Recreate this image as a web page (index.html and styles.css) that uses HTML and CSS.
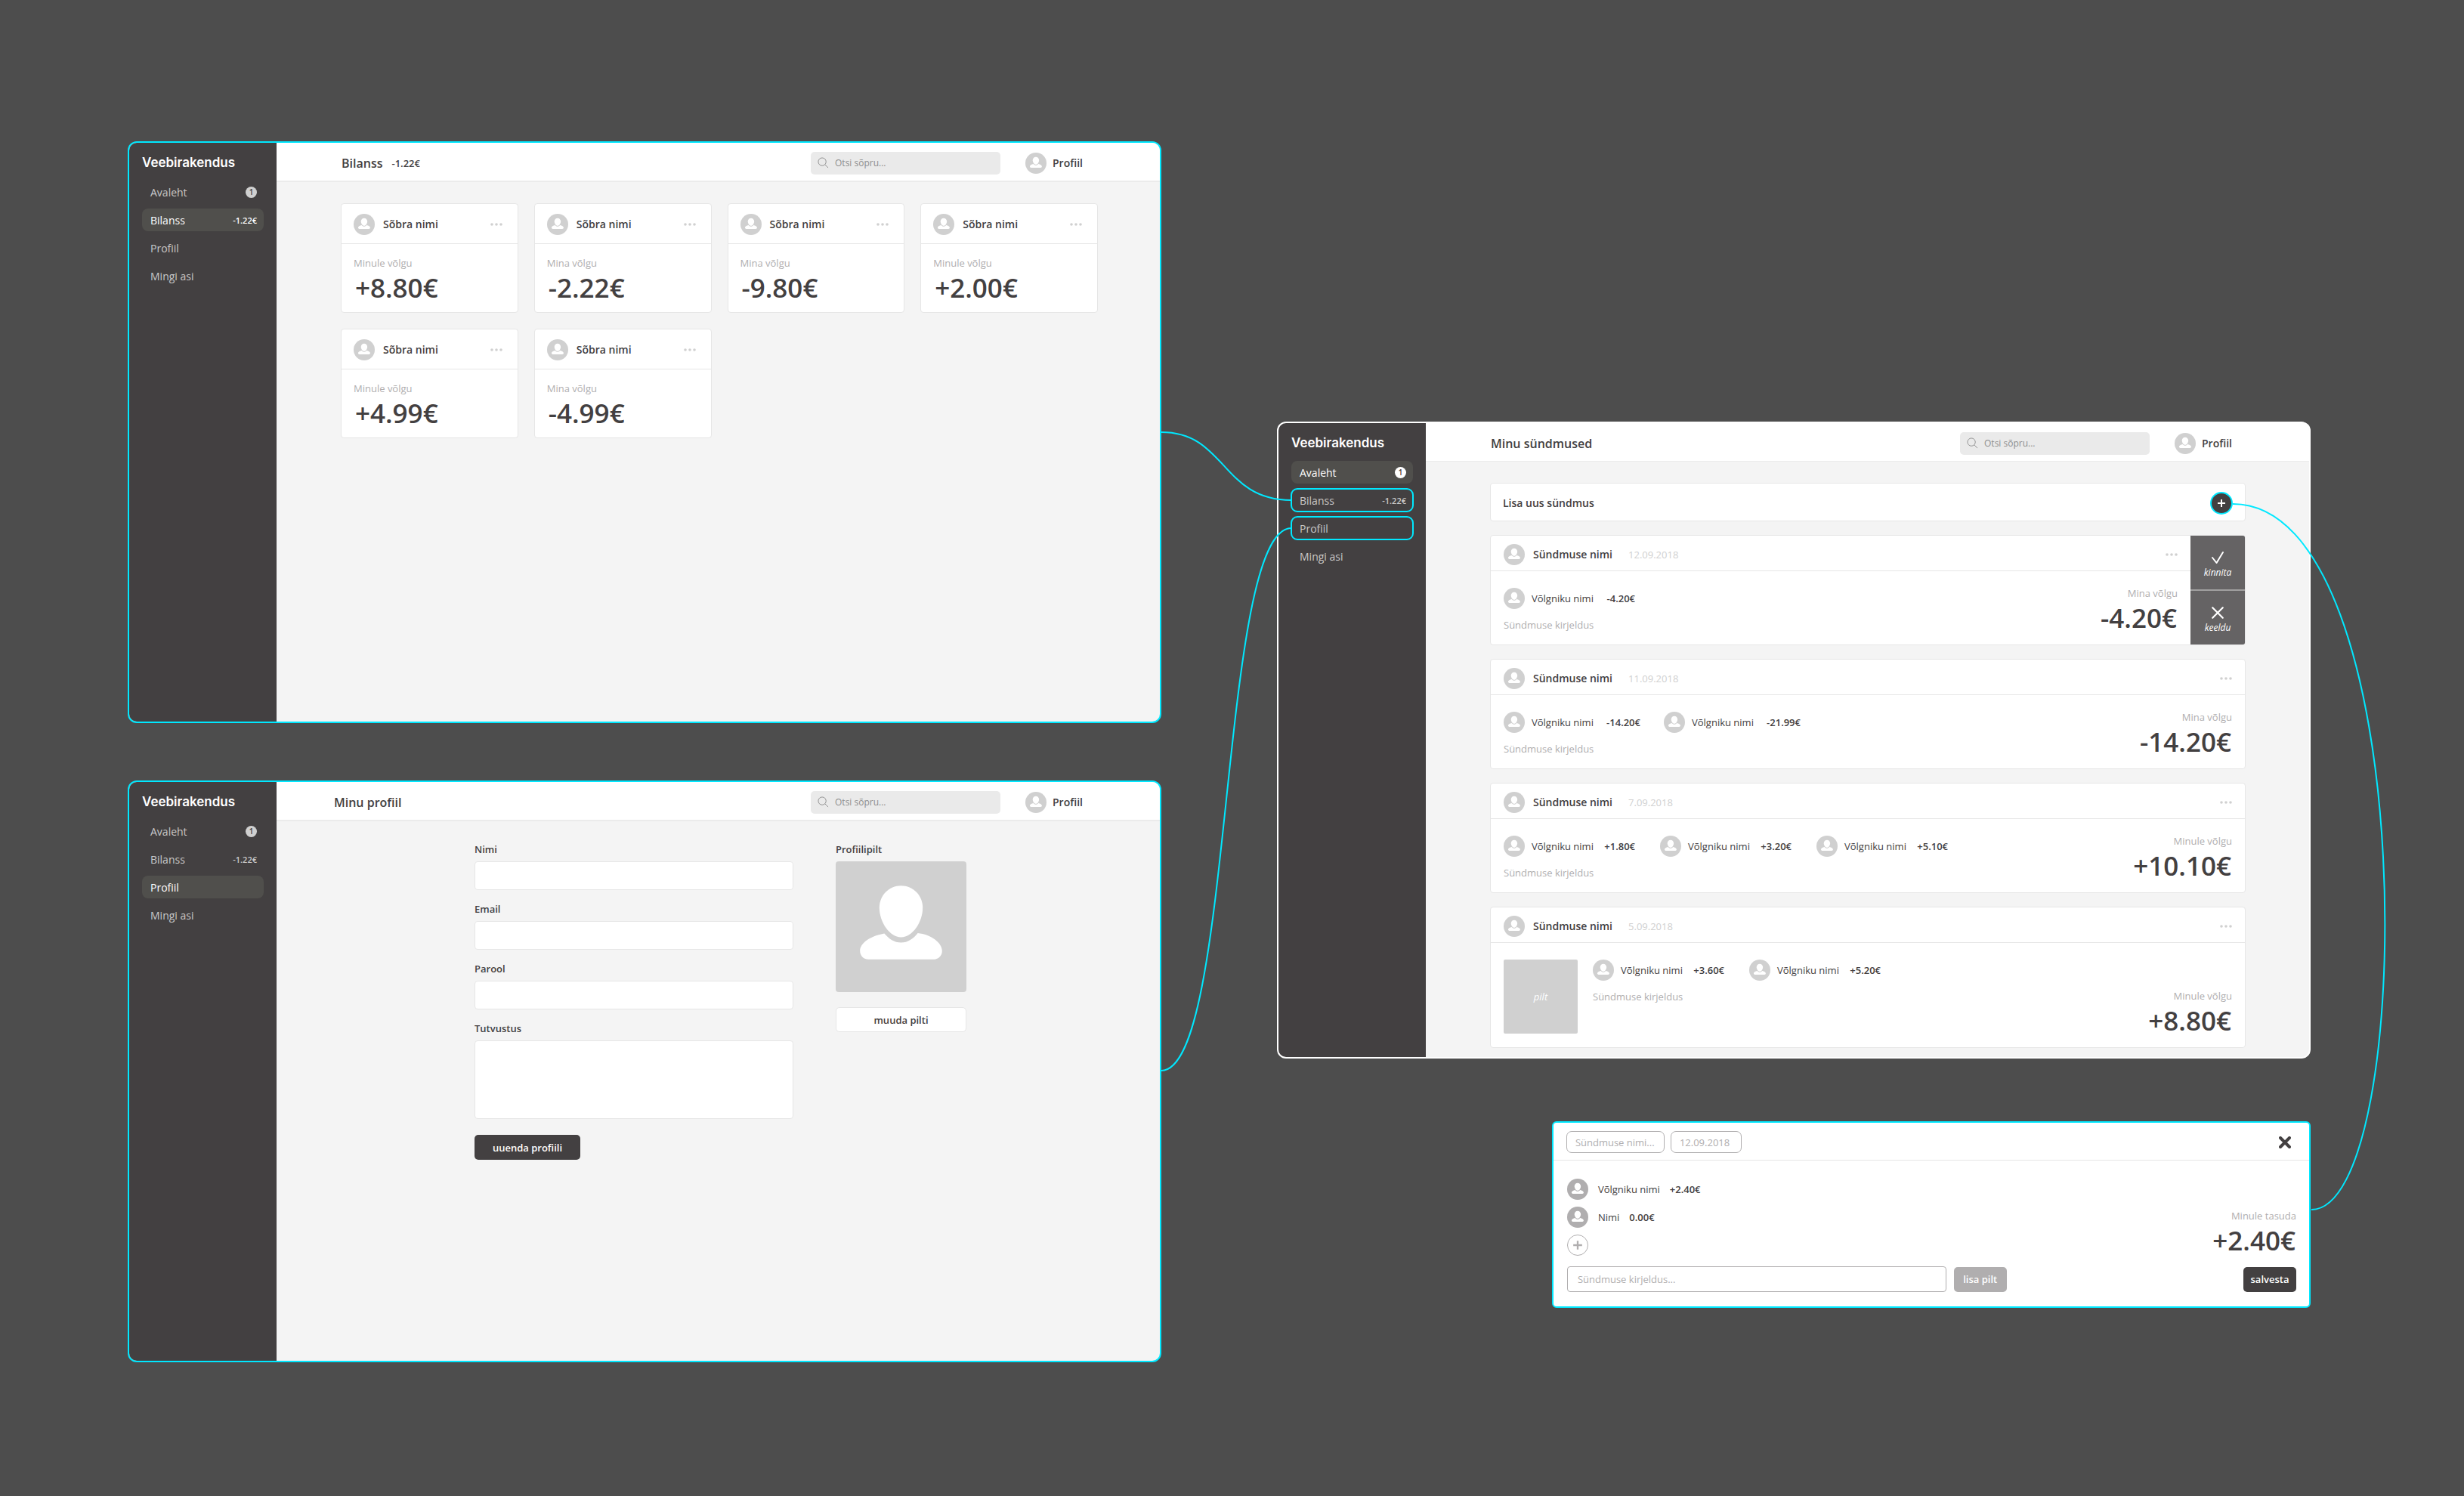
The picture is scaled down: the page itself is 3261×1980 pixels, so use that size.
FILE: index.html
```html
<!DOCTYPE html>
<html lang="et">
<head>
<meta charset="utf-8">
<title>Veebirakendus</title>
<meta name="viewport" content="width=device-width, initial-scale=1">
<link rel="stylesheet" href="styles.css">
</head>
<body>
<svg class="defs" width="0" height="0" aria-hidden="true">
  <symbol id="person" viewBox="0 0 172 172">
    <path d="M86 32C70 32 57.500 45 57.500 61C57.500 80 71 100 86 100S114.500 80 114.500 61C114.500 45 102 32 86 32Z"/>
    <path d="M64 95C70 102 77 107 86 107S102 102 108 94.500C125 96 140 107 140 118C140 125 134 129 129 129H43C36 129 32 123 32 118C32 107 47 98 64 95Z"/>
  </symbol>
  <symbol id="avatar" viewBox="-8 -6 189 189">
    <path d="M86 32C70 32 57.500 45 57.500 61C57.500 80 71 100 86 100S114.500 80 114.500 61C114.500 45 102 32 86 32Z"/>
    <path d="M64 95C70 102 77 107 86 107S102 102 108 94.500C125 96 140 107 140 118C140 125 134 129 129 129H43C36 129 32 123 32 118C32 107 47 98 64 95Z"/>
  </symbol>
  <symbol id="search" viewBox="0 0 16 16">
    <circle cx="6.500" cy="6.500" r="5.500"/><path d="M10.500 10.500L15 15"/>
  </symbol>
  <symbol id="dots" viewBox="0 0 16 4">
    <circle cx="2" cy="2" r="1.800"/><circle cx="8" cy="2" r="1.800"/><circle cx="14" cy="2" r="1.800"/>
  </symbol>
  <symbol id="plus" viewBox="0 0 12 12"><path d="M6 1V11M1 6H11"/></symbol>
  <symbol id="cross" viewBox="0 0 16 16"><path d="M2 2L14 14M14 2L2 14"/></symbol>
  <symbol id="check" viewBox="0 0 18 18"><path d="M2 9L7.500 16L16 2"/></symbol>
</svg>

<div class="canvas">
  <div class="column column-left">

    <section class="screen linked">
      <aside class="sidebar">
        <div class="brand">Veebirakendus</div>
        <nav class="nav">
          <a href="#avaleht">Avaleht <span class="badge">1</span></a>
          <a href="#bilanss" class="active">Bilanss <span class="sum">-1.22€</span></a>
          <a href="#profiil">Profiil</a>
          <a href="#mingi">Mingi asi</a>
        </nav>
      </aside>
      <div class="main">
        <header class="topbar">
          <h1>Bilanss</h1><span class="topsum">-1.22€</span>
          <label class="search"><svg><use href="#search"/></svg><input type="search" placeholder="Otsi sõpru..." aria-label="Otsi sõpru"></label>
          <a class="profile" href="#profiil"><svg class="avatar"><use href="#avatar"/></svg>Profiil</a>
        </header>
        <div class="cards">
          <article class="card">
            <div class="card-head"><svg class="avatar"><use href="#avatar"/></svg><h2>Sõbra nimi</h2><button class="more" aria-label="Valikud"><svg><use href="#dots"/></svg></button></div>
            <div class="card-body"><span class="muted">Minule võlgu</span><strong class="amount">+8.80€</strong></div>
          </article>
          <article class="card">
            <div class="card-head"><svg class="avatar"><use href="#avatar"/></svg><h2>Sõbra nimi</h2><button class="more" aria-label="Valikud"><svg><use href="#dots"/></svg></button></div>
            <div class="card-body"><span class="muted">Mina võlgu</span><strong class="amount">-2.22€</strong></div>
          </article>
          <article class="card">
            <div class="card-head"><svg class="avatar"><use href="#avatar"/></svg><h2>Sõbra nimi</h2><button class="more" aria-label="Valikud"><svg><use href="#dots"/></svg></button></div>
            <div class="card-body"><span class="muted">Mina võlgu</span><strong class="amount">-9.80€</strong></div>
          </article>
          <article class="card">
            <div class="card-head"><svg class="avatar"><use href="#avatar"/></svg><h2>Sõbra nimi</h2><button class="more" aria-label="Valikud"><svg><use href="#dots"/></svg></button></div>
            <div class="card-body"><span class="muted">Minule võlgu</span><strong class="amount">+2.00€</strong></div>
          </article>
          <article class="card">
            <div class="card-head"><svg class="avatar"><use href="#avatar"/></svg><h2>Sõbra nimi</h2><button class="more" aria-label="Valikud"><svg><use href="#dots"/></svg></button></div>
            <div class="card-body"><span class="muted">Minule võlgu</span><strong class="amount">+4.99€</strong></div>
          </article>
          <article class="card">
            <div class="card-head"><svg class="avatar"><use href="#avatar"/></svg><h2>Sõbra nimi</h2><button class="more" aria-label="Valikud"><svg><use href="#dots"/></svg></button></div>
            <div class="card-body"><span class="muted">Mina võlgu</span><strong class="amount">-4.99€</strong></div>
          </article>
        </div>
      </div>
    </section>

    <section class="screen linked">
      <aside class="sidebar">
        <div class="brand">Veebirakendus</div>
        <nav class="nav">
          <a href="#avaleht">Avaleht <span class="badge">1</span></a>
          <a href="#bilanss">Bilanss <span class="sum">-1.22€</span></a>
          <a href="#profiil" class="active">Profiil</a>
          <a href="#mingi">Mingi asi</a>
        </nav>
      </aside>
      <div class="main">
        <header class="topbar topbar-profile">
          <h1>Minu profiil</h1>
          <label class="search"><svg><use href="#search"/></svg><input type="search" placeholder="Otsi sõpru..." aria-label="Otsi sõpru"></label>
          <a class="profile" href="#profiil"><svg class="avatar"><use href="#avatar"/></svg>Profiil</a>
        </header>
        <form class="profile-form">
          <div class="fields">
            <div class="field"><label for="nimi">Nimi</label><input id="nimi" type="text"></div>
            <div class="field"><label for="email">Email</label><input id="email" type="email"></div>
            <div class="field"><label for="parool">Parool</label><input id="parool" type="password"></div>
            <div class="field"><label for="tutvustus">Tutvustus</label><textarea id="tutvustus"></textarea></div>
            <button class="btn btn-dark btn-update" type="button">uuenda profiili</button>
          </div>
          <div class="picture">
            <h3>Profiilipilt</h3>
            <svg class="portrait" viewBox="0 0 172 172"><use href="#person"/></svg>
            <button class="btn btn-light" type="button">muuda pilti</button>
          </div>
        </form>
      </div>
    </section>
  </div>

  <div class="column column-right">
    <section class="screen home">
      <aside class="sidebar">
        <div class="brand">Veebirakendus</div>
        <nav class="nav">
          <a href="#avaleht" class="active">Avaleht <span class="badge">1</span></a>
          <a href="#bilanss" class="marked">Bilanss <span class="sum">-1.22€</span></a>
          <a href="#profiil" class="marked">Profiil</a>
          <a href="#mingi">Mingi asi</a>
        </nav>
      </aside>
      <div class="main">
        <header class="topbar">
          <h1>Minu sündmused</h1>
          <label class="search"><svg><use href="#search"/></svg><input type="search" placeholder="Otsi sõpru..." aria-label="Otsi sõpru"></label>
          <a class="profile" href="#profiil"><svg class="avatar"><use href="#avatar"/></svg>Profiil</a>
        </header>
        <div class="events">
          <div class="add-event"><h2>Lisa uus sündmus</h2><button class="add" aria-label="Lisa uus sündmus"><svg><use href="#plus"/></svg></button></div>

          <article class="event">
            <div class="event-content">
              <div class="event-head"><svg class="avatar"><use href="#avatar"/></svg><h2>Sündmuse nimi</h2><time>12.09.2018</time><button class="more" aria-label="Valikud"><svg><use href="#dots"/></svg></button></div>
              <div class="event-body">
                <div class="details">
                  <div class="debtors"><div class="debtor"><svg class="avatar"><use href="#avatar"/></svg>Võlgniku nimi<b>-4.20€</b></div></div>
                  <p class="muted">Sündmuse kirjeldus</p>
                </div>
                <div class="total"><span class="muted">Mina võlgu</span><strong class="amount">-4.20€</strong></div>
              </div>
            </div>
            <div class="actions">
              <button><svg><use href="#check"/></svg>kinnita</button>
              <button><svg><use href="#cross"/></svg>keeldu</button>
            </div>
          </article>

          <article class="event">
            <div class="event-content">
              <div class="event-head"><svg class="avatar"><use href="#avatar"/></svg><h2>Sündmuse nimi</h2><time>11.09.2018</time><button class="more" aria-label="Valikud"><svg><use href="#dots"/></svg></button></div>
              <div class="event-body">
                <div class="details">
                  <div class="debtors debtors-wide">
                    <div class="debtor"><svg class="avatar"><use href="#avatar"/></svg>Võlgniku nimi<b>-14.20€</b></div>
                    <div class="debtor"><svg class="avatar"><use href="#avatar"/></svg>Võlgniku nimi<b>-21.99€</b></div>
                  </div>
                  <p class="muted">Sündmuse kirjeldus</p>
                </div>
                <div class="total"><span class="muted">Mina võlgu</span><strong class="amount">-14.20€</strong></div>
              </div>
            </div>
          </article>

          <article class="event">
            <div class="event-content">
              <div class="event-head"><svg class="avatar"><use href="#avatar"/></svg><h2>Sündmuse nimi</h2><time>7.09.2018</time><button class="more" aria-label="Valikud"><svg><use href="#dots"/></svg></button></div>
              <div class="event-body">
                <div class="details">
                  <div class="debtors">
                    <div class="debtor"><svg class="avatar"><use href="#avatar"/></svg>Võlgniku nimi<b>+1.80€</b></div>
                    <div class="debtor"><svg class="avatar"><use href="#avatar"/></svg>Võlgniku nimi<b>+3.20€</b></div>
                    <div class="debtor"><svg class="avatar"><use href="#avatar"/></svg>Võlgniku nimi<b>+5.10€</b></div>
                  </div>
                  <p class="muted">Sündmuse kirjeldus</p>
                </div>
                <div class="total"><span class="muted">Minule võlgu</span><strong class="amount">+10.10€</strong></div>
              </div>
            </div>
          </article>

          <article class="event">
            <div class="event-content">
              <div class="event-head"><svg class="avatar"><use href="#avatar"/></svg><h2>Sündmuse nimi</h2><time>5.09.2018</time><button class="more" aria-label="Valikud"><svg><use href="#dots"/></svg></button></div>
              <div class="event-body">
                <div class="thumb">pilt</div>
                <div class="details">
                  <div class="debtors">
                    <div class="debtor"><svg class="avatar"><use href="#avatar"/></svg>Võlgniku nimi<b>+3.60€</b></div>
                    <div class="debtor"><svg class="avatar"><use href="#avatar"/></svg>Võlgniku nimi<b>+5.20€</b></div>
                  </div>
                  <p class="muted">Sündmuse kirjeldus</p>
                </div>
                <div class="total"><span class="muted">Minule võlgu</span><strong class="amount">+8.80€</strong></div>
              </div>
            </div>
          </article>
        </div>
      </div>
    </section>

    <form class="dialog">
      <div class="dialog-head">
        <input class="pill pill-name" type="text" placeholder="Sündmuse nimi..." aria-label="Sündmuse nimi">
        <input class="pill pill-date" type="text" placeholder="12.09.2018" aria-label="Kuupäev">
        <button class="close" type="button" aria-label="Sulge"><svg><use href="#cross"/></svg></button>
      </div>
      <div class="dialog-body">
        <div class="people">
          <div class="person"><svg class="avatar"><use href="#avatar"/></svg>Võlgniku nimi<b>+2.40€</b></div>
          <div class="person"><svg class="avatar"><use href="#avatar"/></svg>Nimi<b>0.00€</b></div>
          <button class="add-person" type="button" aria-label="Lisa võlgnik"><svg><use href="#plus"/></svg></button>
        </div>
        <div class="total"><span class="muted">Minule tasuda</span><strong class="amount">+2.40€</strong></div>
      </div>
      <div class="dialog-foot">
        <input class="description" type="text" placeholder="Sündmuse kirjeldus..." aria-label="Sündmuse kirjeldus">
        <button class="btn btn-gray" type="button">lisa pilt</button>
        <button class="btn btn-dark btn-save" type="button">salvesta</button>
      </div>
    </form>
  </div>

  <svg class="links" viewBox="0 0 3261 1980" preserveAspectRatio="none" aria-hidden="true">
    <path d="M1537 572C1623 572 1616 662 1709 662"/>
    <path d="M1537 1417C1633 1417 1613 699 1709 699"/>
    <path d="M2955 667C3206 667 3200 1601 3059 1601"/>
  </svg>
</div>
</body>
</html>
```
FILE: styles.css
```css
* { box-sizing: border-box; }

:root {
  --cyan: #00e8ff;
  --ink: #434041;
  --muted: #b0aeaf;
  --soft: #d0d0d0;
  --line: #e6e6e6;
}

body {
  margin: 0;
  background: #4d4d4d;
  color: var(--ink);
  font: 13px/20px "Open Sans", "Noto Sans", sans-serif;
}

h1, h2, h3, p { margin: 0; font-weight: 600; }
h1 { font-size: 16px; }
h2 { font-size: 14px; }
h3 { font-size: 13px; }
a { color: inherit; text-decoration: none; }
b, strong { font-weight: 600; }
button, input, textarea { font: inherit; color: inherit; }
button { padding: 0; border: 0; background: none; cursor: pointer; }
.defs { position: absolute; }

.canvas {
  position: relative;
  display: grid;
  grid-template-columns: 169fr 1368fr 153fr 1368fr 203fr;
  min-height: 100vh;
}
.column { display: flex; flex-direction: column; min-width: 0; }
.column-left { grid-column: 2; padding: 187px 0 40px; gap: 76px; }
.column-right { grid-column: 4; padding: 558px 0 40px; gap: 83px; }

.links {
  position: absolute;
  inset: 0;
  width: 100%;
  height: 100%;
  pointer-events: none;
  fill: none;
  stroke: var(--cyan);
  stroke-width: 2;
}
.links path { vector-effect: non-scaling-stroke; }

/* Application screens */
.screen {
  display: flex;
  min-height: 770px;
  border: 2px solid #fff;
  border-radius: 12px;
  overflow: hidden;
  background: #f4f4f4;
}
.linked { border-color: var(--cyan); }
.main { flex: 1; min-width: 0; }

.sidebar {
  flex: none;
  width: 195px;
  padding: 16px 17px;
  background: var(--ink);
  color: #c9c8c8;
}
.brand {
  margin-bottom: 14px;
  color: #fff;
  font: 600 17px/20px Inter, sans-serif;
}
.nav { display: flex; flex-direction: column; gap: 7px; }
.nav a {
  display: flex;
  align-items: center;
  justify-content: space-between;
  height: 30px;
  padding: 1px 9px 0 11px;
  border-radius: 8px;
  font-size: 14px;
}
.nav .active { background: #504f4c; color: #fff; }
.nav .marked { outline: 2px solid var(--cyan); outline-offset: -1px; }
.badge {
  width: 15px;
  height: 15px;
  border-radius: 50%;
  background: var(--soft);
  color: var(--ink);
  font: 600 10px/15px "Open Sans", sans-serif;
  text-align: center;
}
.active .badge { background: #fff; }
.sum { font-size: 11px; font-weight: 600; }

.topbar {
  display: flex;
  align-items: center;
  height: 52px;
  padding: 3px 102px 0 86px;
  border-bottom: 2px solid #ebebeb;
  background: #fff;
}
.topbar-profile { padding-left: 76px; }
.home .topbar { height: 51px; border-width: 1px; }
.topsum { margin-left: 12px; font-weight: 600; font-size: 13px; }
.search {
  display: flex;
  align-items: center;
  gap: 8px;
  width: 251px;
  height: 30px;
  margin: 0 33px 0 auto;
  padding: 0 9px;
  border-radius: 5px;
  background: #eaeaea;
}
.search svg { width: 15px; height: 15px; fill: none; stroke: #8e8e8e; }
.search input {
  flex: 1;
  min-width: 0;
  padding: 0;
  border: 0;
  background: none;
  outline: 0;
  font-size: 12px;
}
.search input::placeholder { color: #8e8e8e; opacity: 1; }
.profile { display: flex; align-items: center; gap: 8px; font-size: 14px; font-weight: 600; }
.avatar {
  flex: none;
  width: 28px;
  height: 28px;
  border-radius: 50%;
  background: var(--soft);
  fill: #fff;
}
.muted { color: var(--muted); font-size: 13px; font-weight: 400; }
.amount { font-size: 35px; line-height: 40px; }
.more { margin-left: auto; width: 16px; height: 20px; }
.more svg { display: block; width: 16px; height: 4px; fill: var(--soft); }

/* Balance cards */
.cards {
  display: grid;
  grid-template-columns: repeat(4, 1fr);
  gap: 21px;
  padding: 28px 82px 28px 85px;
}
.card { border: 1px solid var(--line); border-radius: 4px; background: #fff; }
.card-head {
  display: flex;
  align-items: center;
  gap: 11px;
  height: 53px;
  padding: 2px 20px 0 16px;
  border-bottom: 1px solid var(--line);
}
.card-body { display: flex; flex-direction: column; height: 90px; padding: 15px 16px; }
.card-body .amount { margin-top: 3px; padding-left: 2px; }

/* Profile form */
.profile-form { display: flex; gap: 56px; padding: 27px 256px 27px 262px; }
.fields { flex: 1; display: flex; flex-direction: column; gap: 21px; }
.field { display: flex; flex-direction: column; gap: 6px; }
.field label { font-size: 13px; font-weight: 600; }
.field input, .field textarea {
  height: 38px;
  padding: 0 11px;
  border: 1px solid var(--line);
  border-radius: 4px;
  background: #fff;
  resize: none;
}
.field input { margin-bottom: -6px; }
.field textarea { height: 104px; }
.btn {
  height: 33px;
  border-radius: 5px;
  font-size: 13px;
  font-weight: 600;
}
.btn-dark { background: var(--ink); color: #fff; }
.btn-light { width: 100%; border: 1px solid var(--line); background: #fff; }
.btn-gray { width: 70px; background: var(--muted); color: #fff; }
.btn-update { width: 140px; }
.btn-save { width: 70px; margin-left: auto; }
.picture { width: 173px; display: flex; flex-direction: column; gap: 6px; }
.portrait { width: 100%; border-radius: 4px; background: var(--soft); fill: #fff; }
.picture .btn { margin-top: 14px; }

/* Event list */
.events {
  display: flex;
  flex-direction: column;
  gap: 18px;
  padding: 28px 84px 12px 85px;
}
.add-event {
  display: flex;
  align-items: center;
  justify-content: space-between;
  height: 51px;
  padding: 2px 16px 0 16px;
  border: 1px solid var(--line);
  border-radius: 4px;
  background: #fff;
}
.add {
  display: grid;
  place-items: center;
  width: 30px;
  height: 30px;
  border: 2px solid var(--cyan);
  border-radius: 50%;
  background: var(--ink);
}
.add svg { width: 12px; height: 12px; stroke: #fff; stroke-width: 2; }
.event {
  display: flex;
  min-height: 146px;
  border: 1px solid var(--line);
  border-radius: 4px;
  overflow: hidden;
  background: #fff;
}
.event-content { flex: 1; min-width: 0; }
.event-head {
  display: flex;
  align-items: center;
  gap: 11px;
  height: 47px;
  padding: 4px 17px 0;
  border-bottom: 1px solid var(--line);
}
.event-head time { margin-left: 10px; color: var(--soft); }
.event-body { display: flex; gap: 20px; padding: 19px 17px 15px; }
.details { padding-top: 3px; }
.debtors { display: flex; gap: 33px; }
.debtor { display: flex; align-items: center; gap: 9px; min-width: 174px; white-space: nowrap; }
.debtors-wide { gap: 31px; }
.debtors-wide .debtor { min-width: 181px; }
.debtor b { margin-left: auto; }
.details .muted { margin-top: 11px; }
.total {
  display: flex;
  flex-direction: column;
  align-items: flex-end;
  align-self: flex-end;
  margin-left: auto;
}
.total .amount { margin-top: 3px; padding-right: 1px; }
.thumb {
  display: grid;
  place-items: center;
  width: 98px;
  height: 98px;
  margin: 3px 0;
  border-radius: 2px;
  background: var(--soft);
  color: #fff;
  font-style: italic;
}
.actions {
  display: flex;
  flex-direction: column;
  gap: 2px;
  width: 72px;
  background: #a1a0a0;
}
.actions button {
  flex: 1;
  display: flex;
  flex-direction: column;
  align-items: center;
  justify-content: center;
  gap: 2px;
  padding-top: 6px;
  background: #656364;
  color: #fff;
  font-size: 12px;
  line-height: 18px;
  font-style: italic;
}
.actions svg {
  width: 18px;
  height: 18px;
  fill: none;
  stroke: #fff;
  stroke-width: 2;
  stroke-linecap: round;
  stroke-linejoin: round;
}

/* New event dialog */
.dialog {
  align-self: flex-end;
  width: 73.4%;
  border: 2px solid var(--cyan);
  border-radius: 6px;
  background: #fff;
}
.dialog-head {
  display: flex;
  align-items: center;
  gap: 8px;
  height: 50px;
  padding: 2px 24px 0 17px;
  border-bottom: 1px solid var(--line);
}
.dialog input { border: 1px solid var(--muted); background: #fff; }
.dialog input::placeholder { color: var(--muted); opacity: 1; }
.pill { height: 29px; padding: 0 11px; border-radius: 7px; }
.pill-name { width: 130px; }
.pill-date { width: 94px; }
.close { margin-left: auto; width: 16px; height: 16px; }
.close svg { display: block; width: 16px; height: 16px; stroke: var(--ink); stroke-width: 4; stroke-linecap: round; }
.dialog-body { display: flex; padding: 24px 17px 0 18px; }
.people { display: flex; flex-direction: column; gap: 9px; }
.person { display: flex; align-items: center; gap: 13px; }
.person .avatar { background: var(--muted); }
.add-person {
  display: grid;
  place-items: center;
  width: 28px;
  height: 28px;
  border: 1px solid var(--muted);
  border-radius: 50%;
}
.add-person svg { width: 14px; height: 14px; stroke: var(--muted); stroke-width: 2; }
.dialog-foot { display: flex; align-items: center; gap: 10px; padding: 14px 17px 19px 18px; }
.description { width: 52%; height: 34px; padding: 0 13px; border-radius: 4px; }
```
